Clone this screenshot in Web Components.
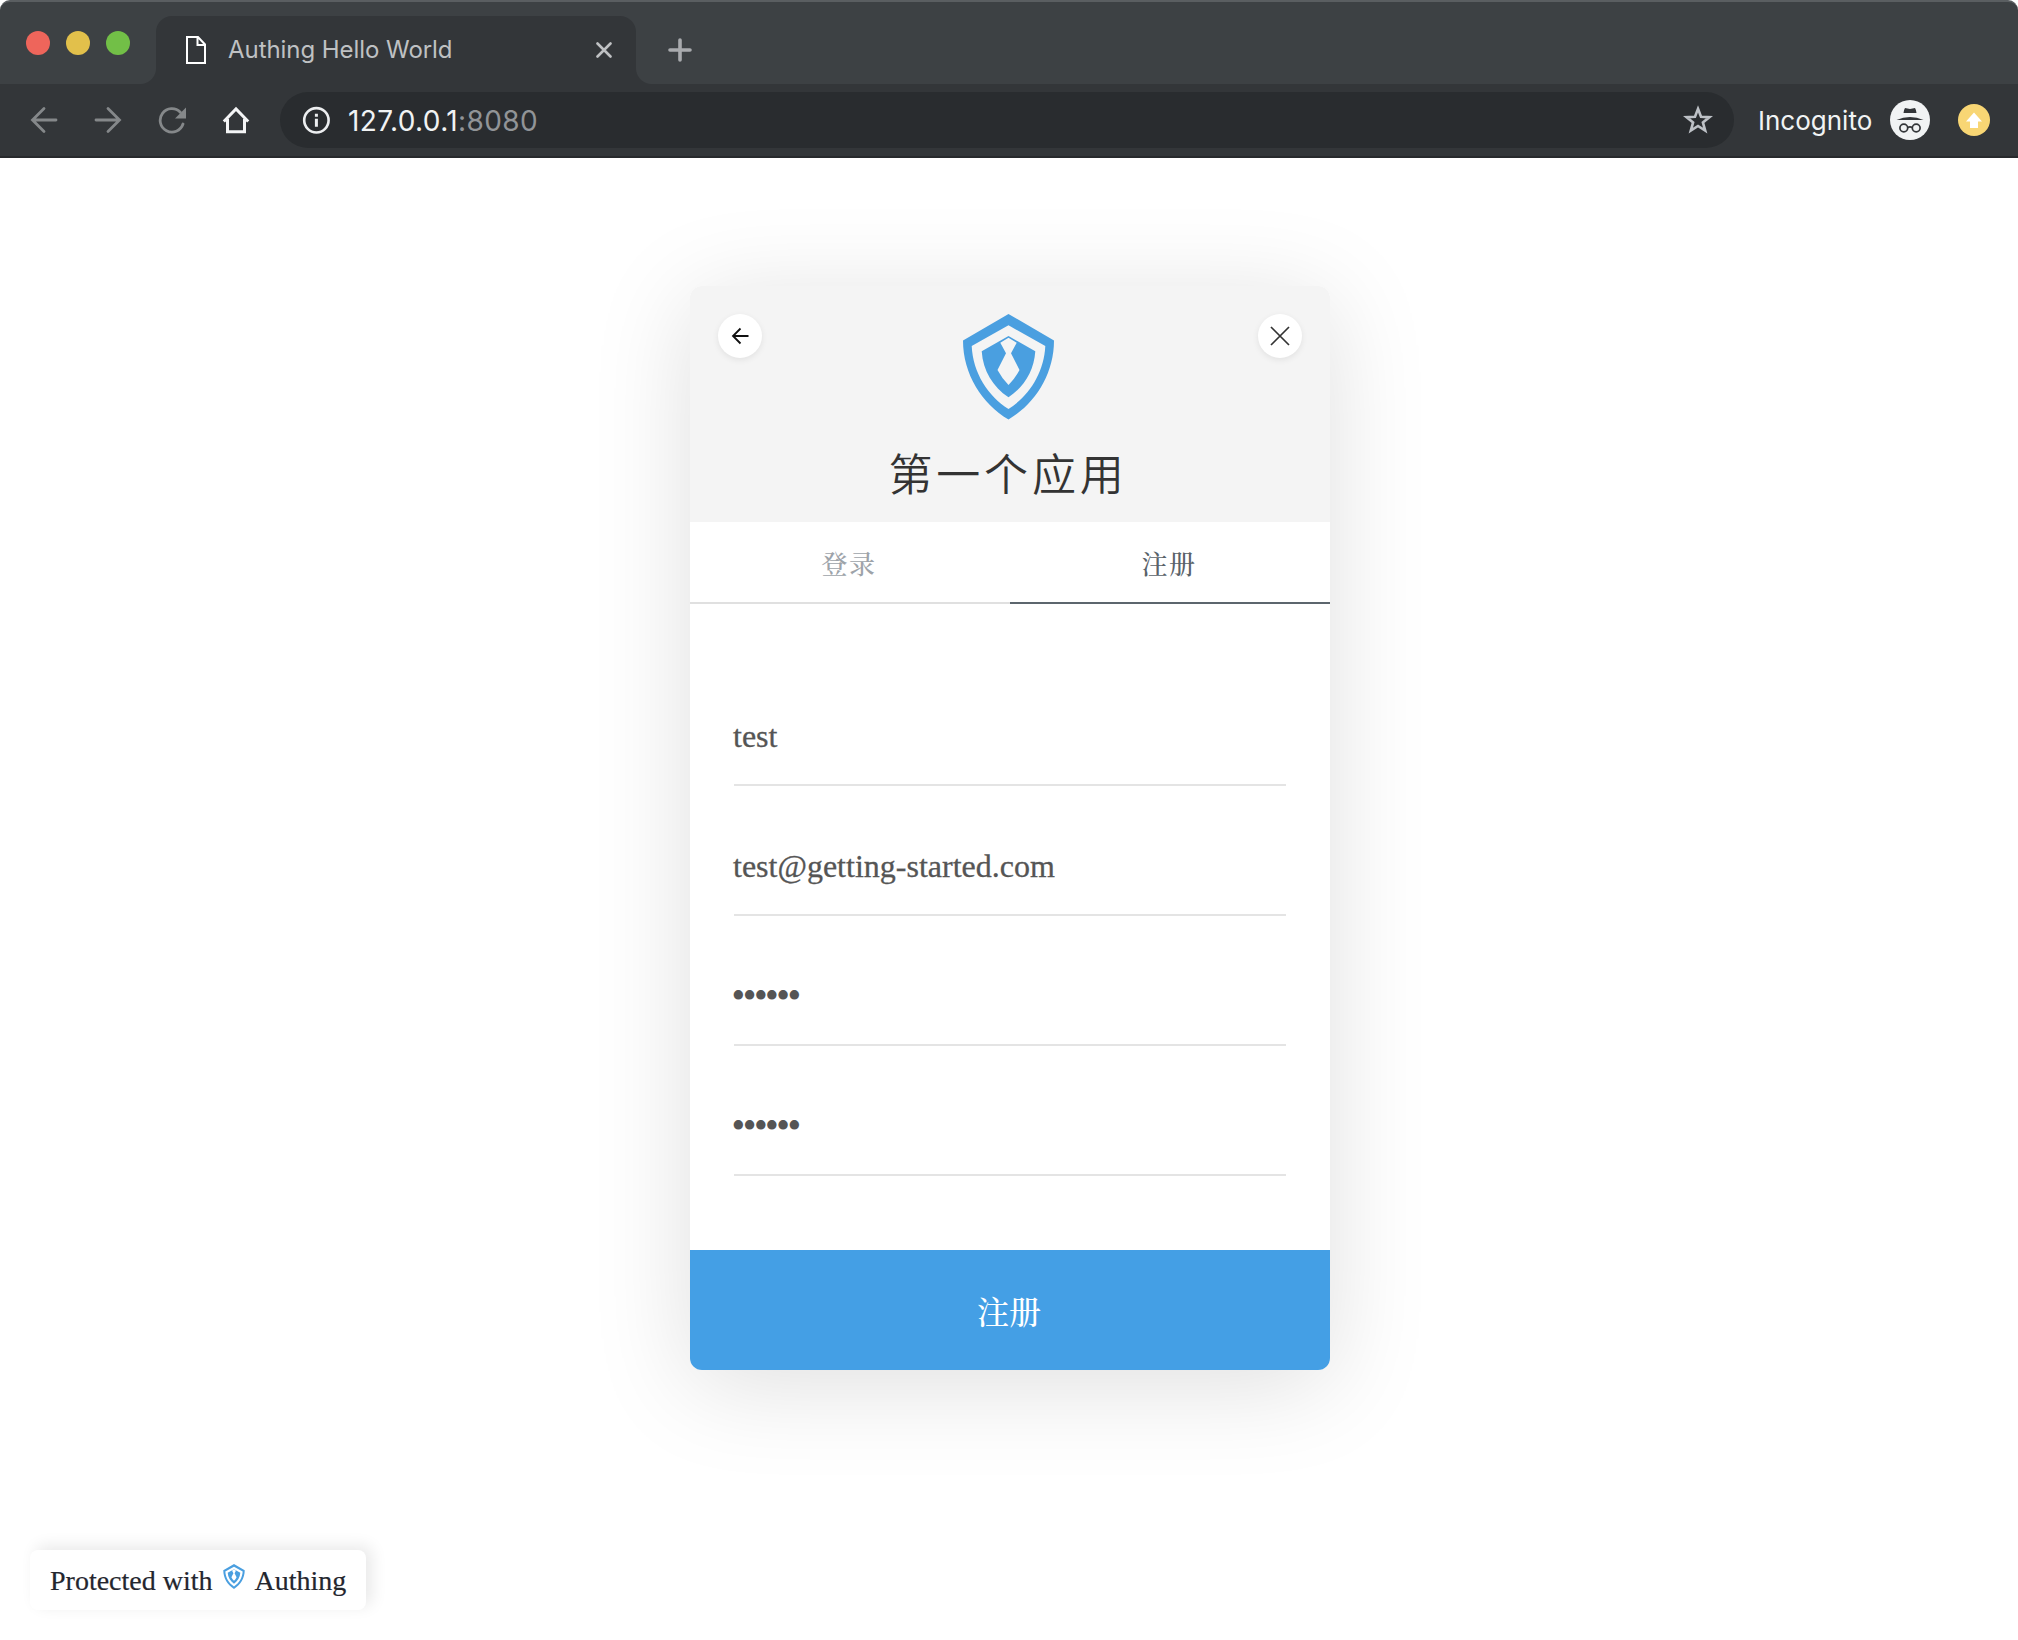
<!DOCTYPE html>
<html lang="zh-CN">
<head>
<meta charset="utf-8">
<title>Authing Hello World</title>
<style>
html,body{margin:0;padding:0;background:#fff}
body{width:2018px;height:1640px;overflow:hidden}
</style>
</head>
<body>
<demo-page></demo-page>
<script>
const define = (name, html) => {
  const t = document.createElement('template');
  t.innerHTML = '<style>*{box-sizing:border-box}svg{display:block;flex:none}</style>' + html;
  customElements.define(name, class extends HTMLElement {
    constructor() {
      super();
      this.attachShadow({mode: 'open'}).appendChild(t.content.cloneNode(true));
    }
  });
};

define('authing-shield', `
<style>:host{display:block}svg{width:100%;height:100%}</style>
<svg viewBox="0 0 91 106" fill="#4a9fe0">
<path fill-rule="evenodd" d="M45.5 0L91 26.5C91 60 72 90 45.5 105.5C19 90 0 60 0 26.5ZM45.5 11.3L8.7 32C10 59 25 82 45.5 95C66 82 81 59 82.3 32Z"/>
<path fill-rule="evenodd" d="M45.5 22L72.3 37.3C71 57 61 73 45.5 83.3C30 73 20 57 18.7 37.3ZM45.5 23.7L37.3 28.7L43 39.3L34.5 56Q39 64.500 45.5 71Q52 64.500 56.500 56L48 39.300L53.700 28.700Z"/>
</svg>`);

define('browser-tabs', `
<style>
:host{display:flex;height:84px;background:#3d4144;border-top:2px solid #5a5e61;border-radius:10px 10px 0 0;padding-top:14px;font-family:Inter,sans-serif;box-sizing:border-box}
.lights{display:flex;gap:16px;padding:15px 26px 0;width:156px}
.lights i{width:24px;height:24px;border-radius:50%}
.tab{position:relative;width:480px;height:68px;background:#333639;border-radius:16px 16px 0 0;display:flex;align-items:center;padding:0 24px 0 30px}
.tab:before,.tab:after{content:"";position:absolute;bottom:0;width:16px;height:16px}
.tab:before{left:-16px;background:radial-gradient(circle at 0 0,transparent 15.5px,#333639 16.500px)}
.tab:after{right:-16px;background:radial-gradient(circle at 100% 0,transparent 15.500px,#333639 16.500px)}
.t{margin-left:22px;flex:1;font-size:24px;letter-spacing:-0.060px;color:#bfc1c3;white-space:nowrap;line-height:30px}
.plus{margin:22px 0 0 32px}
</style>
<div class="lights"><i style="background:#ee655b"></i><i style="background:#e2c04b"></i><i style="background:#72bf47"></i></div>
<div class="tab">
<svg width="20" height="28" viewBox="0 0 20 28" fill="none" stroke="#fff" stroke-width="2"><path d="M1 1H12L19 8.500V27H1ZM11.500 1V9H19"/></svg>
<span class="t">Authing Hello World</span>
<svg width="16" height="16" viewBox="0 0 16 16" stroke="#bfc1c3" stroke-width="2.600" stroke-linecap="round"><path d="M1.500 1.500L14.500 14.500M14.500 1.500L1.500 14.500"/></svg>
</div>
<svg class="plus" width="24" height="24" viewBox="0 0 24 24" stroke="#a9abae" stroke-width="3.600" stroke-linecap="round"><path d="M12 2V22M2 12H22"/></svg>`);

define('browser-toolbar', `
<style>
:host{display:flex;box-sizing:border-box;height:74px;background:#333639;border-bottom:2px solid #27292c;align-items:center;padding:0 28px 0 30px;font-family:Inter,sans-serif}
.nav{display:flex;gap:36px;width:250px}
.box{width:1454px;height:56px;border-radius:28px;background:#292c2f;display:flex;align-items:center;padding:0 20px 0 22px}
.url{margin-left:18px;padding-top:1px;flex:1;font-size:28px;letter-spacing:.4px;line-height:34px;color:#f1f3f4;white-space:nowrap}
.url span{color:#919497}
.inc{margin-left:24px;padding-top:2px;width:132px;flex:none;font-size:26px;line-height:34px;color:#f1f3f4;white-space:nowrap}
.y{margin-left:28px}
</style>
<div class="nav">
<svg width="28" height="28" viewBox="0 0 28 28" fill="none" stroke="#85888a" stroke-width="2.800" stroke-linecap="round"><path d="M26 14H3M14 2.500L2.500 14L14 25.500"/></svg>
<svg width="28" height="28" viewBox="0 0 28 28" fill="none" stroke="#85888a" stroke-width="2.800" stroke-linecap="round"><path d="M2 14H25M14 2.500L25.500 14L14 25.500"/></svg>
<svg width="28" height="28" viewBox="0 0 28 28" fill="none" stroke="#85888a" stroke-width="2.800" stroke-linecap="round"><path d="M25 18A11.700 11.700 0 1 1 22.300 6.200"/><path d="M28 1.500V12.500H17Z" fill="#85888a" stroke="none"/></svg>
<svg width="28" height="28" viewBox="0 0 28 28" fill="none" stroke="#f4f5f6" stroke-width="3"><path d="M1.800 15.500L14 3L26.200 15.500M5.500 13V25.800H22.500V13"/></svg>
</div>
<div class="box">
<svg width="28" height="28" viewBox="0 0 28 28" fill="none" stroke="#eceef0" stroke-width="2.600"><circle cx="14.400" cy="14.300" r="12.200"/><path d="M14.400 12.800V20.800M14.400 7.800V10.800" stroke-width="3"/></svg>
<span class="url">127.0.0.1<span>:8080</span></span>
<svg width="32" height="32" viewBox="0 0 32 32" fill="none" stroke="#bdc1c6" stroke-width="2.600"><path d="M16 4.800L19 12.700L27.500 13.100L20.900 18.400L23.200 26.600L16 22L8.800 26.600L11.100 18.400L4.500 13.100L13 12.700Z"/></svg>
</div>
<span class="inc">Incognito</span>
<svg width="40" height="40" viewBox="0 0 40 40"><circle cx="20" cy="20" r="20" fill="#f1f3f4"/><g fill="#333639"><path d="M15 8Q17.500 8.500 20 9Q22.500 8.500 25 8Q26.300 10 26.500 13H13.500Q13.700 10 15 8Z"/><path d="M6.500 20Q13 17 20 17Q27 17 33.500 20Z"/></g><g fill="none" stroke="#333639" stroke-width="1.700"><circle cx="13.800" cy="28" r="3.900"/><circle cx="26.200" cy="28" r="3.900"/><path d="M17.700 27.500Q20 26.300 22.300 27.500"/></g></svg>
<svg class="y" width="32" height="32" viewBox="0 0 32 32"><circle cx="16" cy="16" r="16" fill="#f8d674"/><path d="M16 8.500L24 17.500H20V24H12V17.500H8Z" fill="#fff"/></svg>`);

define('round-button', `
<style>:host{display:flex;width:44px;height:44px;border-radius:50%;background:#fff;align-items:center;justify-content:center;box-shadow:0 2px 6px rgba(0,0,0,.08)}</style><slot></slot>`);

define('card-header', `
<style>
:host{display:flex;box-sizing:border-box;height:236px;background:#f4f4f4;padding:28px;justify-content:space-between;font-family:"Noto Sans CJK SC",sans-serif}
.mid{display:flex;flex-direction:column;align-items:center}
authing-shield{width:91px;height:106px;margin-right:3px}
h1{margin:22px 0 0;padding-right:4px;font-weight:350;font-size:44px;line-height:60px;letter-spacing:3.800px;color:#333;white-space:nowrap}
</style>
<round-button><svg width="18" height="18" viewBox="0 0 18 18" fill="none" stroke="#111" stroke-width="1.800"><path d="M17.500 9H1.500M9.500 1.500L2 9L9.500 16.500"/></svg></round-button>
<div class="mid"><authing-shield></authing-shield><h1>第一个应用</h1></div>
<round-button><svg width="20" height="20" viewBox="0 0 20 20" fill="none" stroke="#333" stroke-width="1.700"><path d="M1 1L19 19M19 1L1 19"/></svg></round-button>`);

define('card-tab', `
<style>
:host{display:flex;box-sizing:border-box;flex:1;justify-content:center;height:82px;border-bottom:2px solid #e0e0e0;font:500 26px/82px "Noto Serif CJK SC","Noto Sans CJK SC",serif;letter-spacing:1.500px;color:#9da3a9;padding-right:2px}
:host([active]){color:#596269;border-color:#5c666d}
</style><slot></slot>`);

define('form-field', `
<style>:host{display:block;box-sizing:border-box;height:90px;border-bottom:2px solid #e4e4e4;margin-bottom:40px;font:32px/80px "Liberation Serif",serif;color:#555;-webkit-text-stroke:.3px #555;text-indent:-1px;white-space:nowrap}
:host([secret]){font-size:39px;letter-spacing:-2.450px;text-indent:-2.500px;-webkit-text-stroke:0}</style><slot></slot>`);

define('login-card', `
<style>
:host{display:flex;flex-direction:column;width:640px;height:1084px;border-radius:12px;background:#fff;box-shadow:0 14px 100px rgba(0,0,0,.13)}
card-header{border-radius:12px 12px 0 0}
.tabs{display:flex}
.fields{flex:1;padding:92px 44px 0}
.submit{height:120px;background:#449fe5;border-radius:0 0 12px 12px;color:#fff;text-align:center;padding-right:2px;font:500 32px/120px "Noto Serif CJK SC","Noto Sans CJK SC",serif}
</style>
<card-header></card-header>
<div class="tabs"><card-tab>登录</card-tab><card-tab active>注册</card-tab></div>
<div class="fields">
<form-field>test</form-field>
<form-field>test@getting-started.com</form-field>
<form-field secret>••••••</form-field>
<form-field secret>••••••</form-field>
</div>
<div class="submit">注册</div>`);

define('protected-badge', `
<style>
:host{display:flex;box-sizing:border-box;width:336px;height:60px;padding-left:20px;border-radius:8px;background:#fff;box-shadow:6px -4px 16px rgba(0,0,0,.09);font:28px/61px "Liberation Serif",serif;color:#24262e;-webkit-text-stroke:.2px #24262e;white-space:nowrap}
authing-shield{width:22px;height:25px;margin:14px 10px 0 10px}
</style>
<span>Protected with</span><authing-shield></authing-shield><span>Authing</span>`);

define('demo-page', `
<style>
:host{display:flex;flex-direction:column;width:2018px;height:1640px;background:#fff}
main{flex:1;display:flex;flex-direction:column;justify-content:space-between;padding:128px 0 30px}
login-card{margin-left:690px}
protected-badge{margin-left:30px}
</style>
<browser-tabs></browser-tabs><browser-toolbar></browser-toolbar>
<main><login-card></login-card><protected-badge></protected-badge></main>`);
</script>
</body>
</html>
